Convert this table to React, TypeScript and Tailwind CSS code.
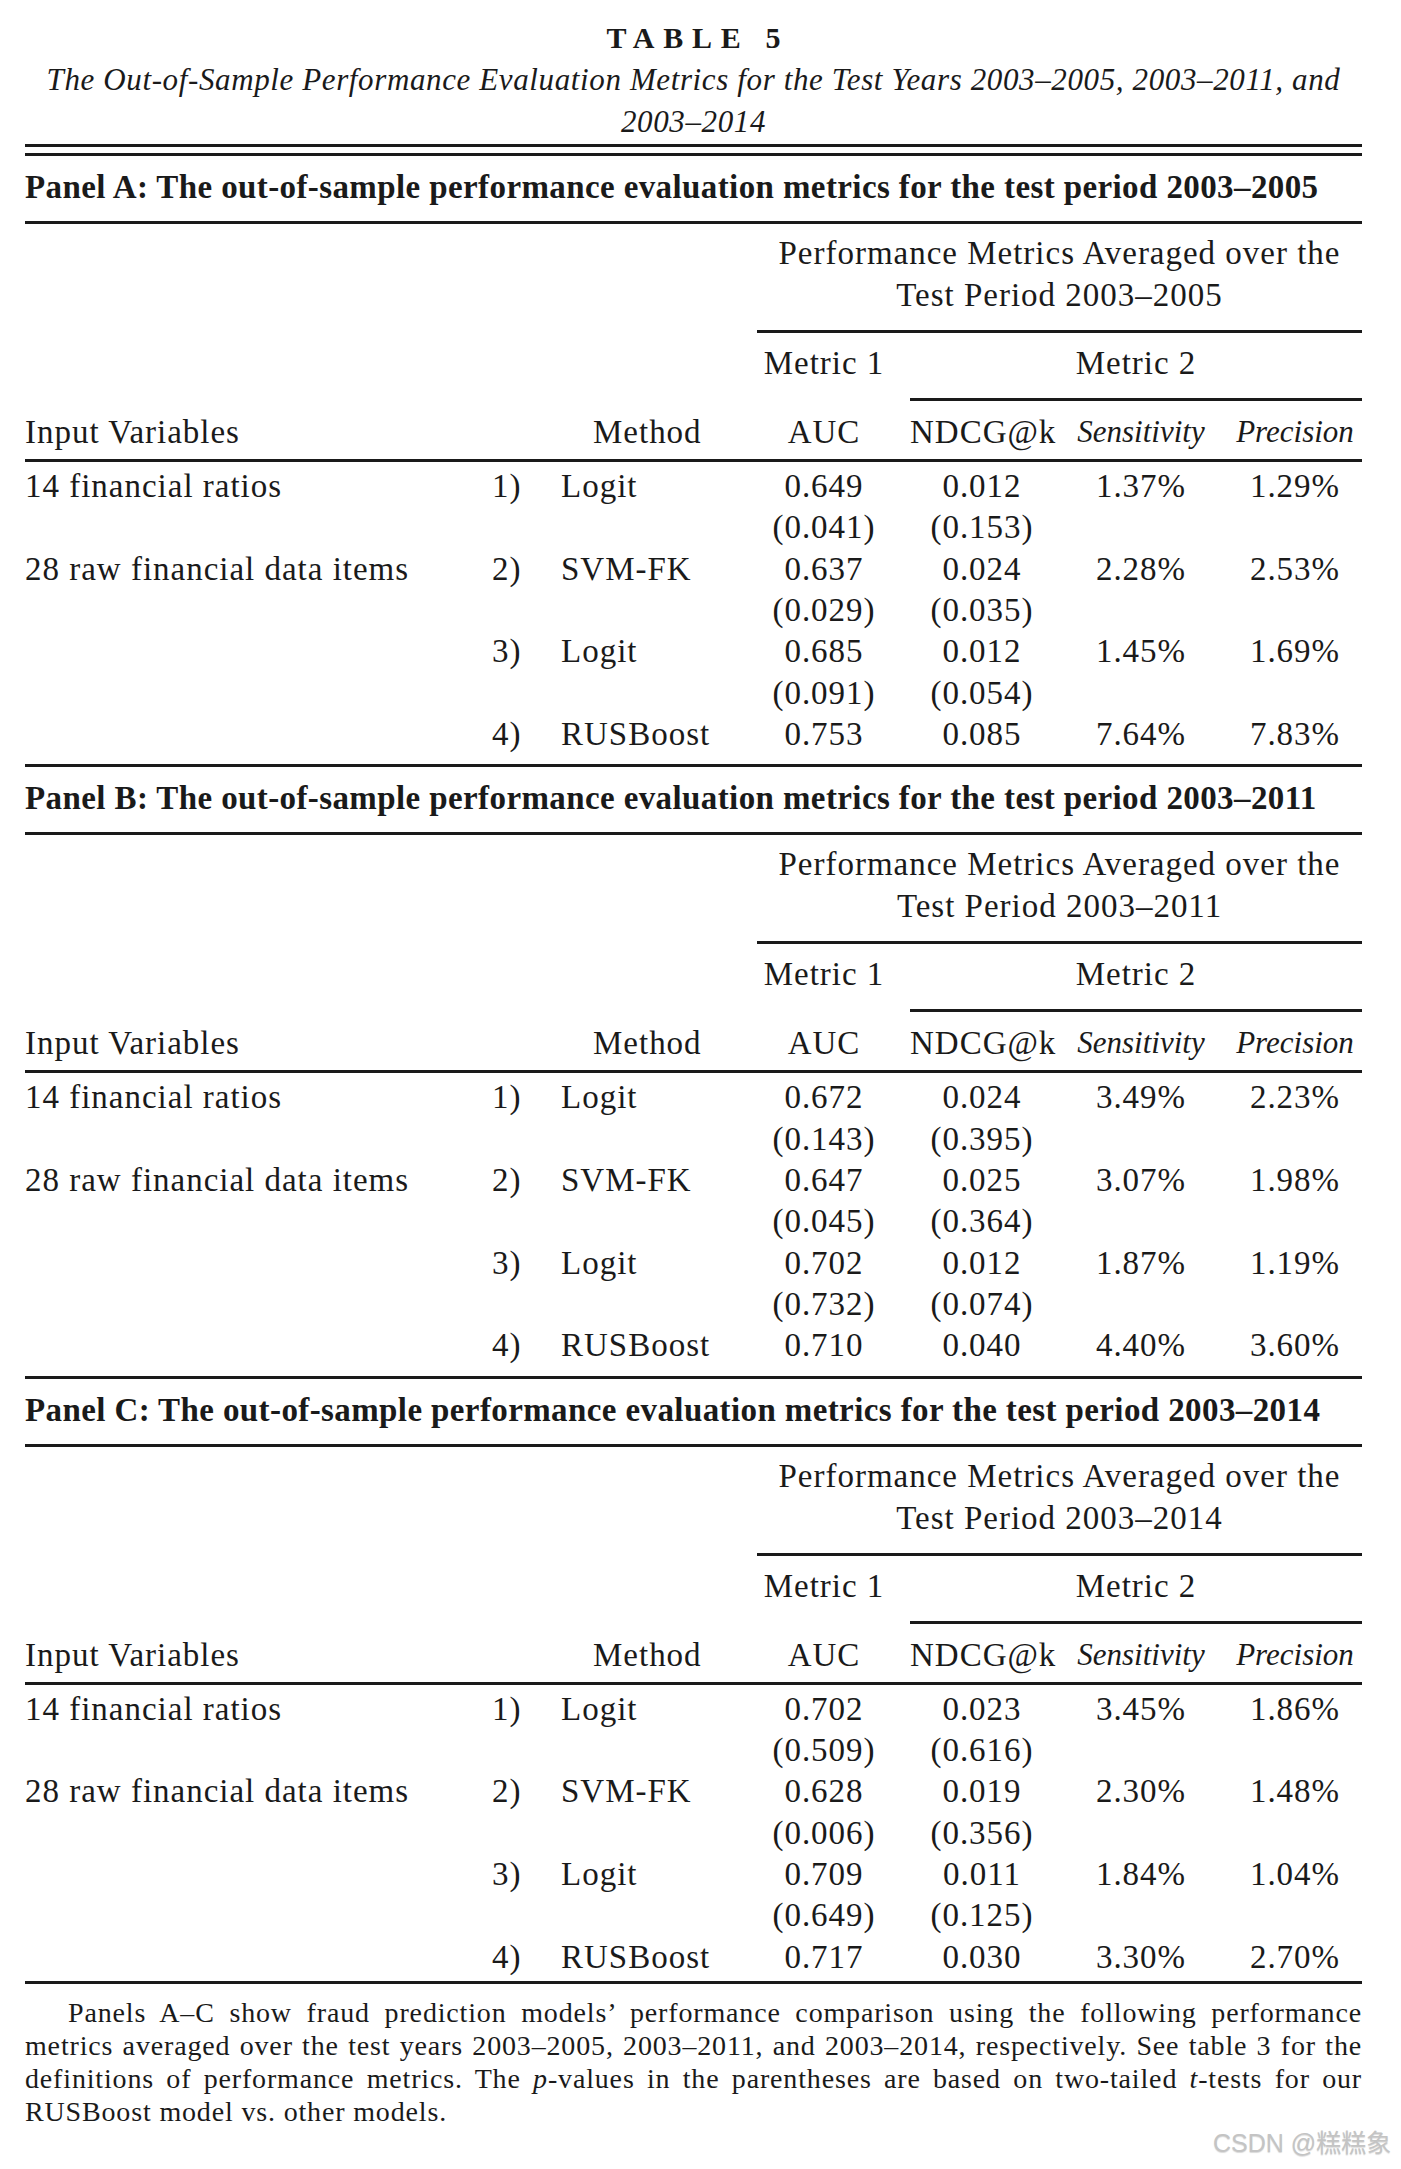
import React from 'react';

type Row = {
  input?: string;
  num?: string;
  method?: string;
  auc: string;
  ndcg: string;
  sens?: string;
  prec?: string;
};

interface Panel {
  label: string;
  period: string;
  rows: Row[];
}

const mk = (vals: string[][]): Row[] => {
  const inputs = ['14 financial ratios', '28 raw financial data items', '', ''];
  const methods = ['Logit', 'SVM-FK', 'Logit', 'RUSBoost'];
  const out: Row[] = [];
  vals.forEach((v, i) => {
    out.push({ input: inputs[i], num: `${i + 1})`, method: methods[i], auc: v[0], ndcg: v[1], sens: v[2], prec: v[3] });
    if (i < 3) out.push({ auc: v[4], ndcg: v[5] });
  });
  return out;
};

const panels: Panel[] = [
  {
    label: 'A',
    period: '2003–2005',
    rows: mk([
      ['0.649', '0.012', '1.37%', '1.29%', '(0.041)', '(0.153)'],
      ['0.637', '0.024', '2.28%', '2.53%', '(0.029)', '(0.035)'],
      ['0.685', '0.012', '1.45%', '1.69%', '(0.091)', '(0.054)'],
      ['0.753', '0.085', '7.64%', '7.83%'],
    ]),
  },
  {
    label: 'B',
    period: '2003–2011',
    rows: mk([
      ['0.672', '0.024', '3.49%', '2.23%', '(0.143)', '(0.395)'],
      ['0.647', '0.025', '3.07%', '1.98%', '(0.045)', '(0.364)'],
      ['0.702', '0.012', '1.87%', '1.19%', '(0.732)', '(0.074)'],
      ['0.710', '0.040', '4.40%', '3.60%'],
    ]),
  },
  {
    label: 'C',
    period: '2003–2014',
    rows: mk([
      ['0.702', '0.023', '3.45%', '1.86%', '(0.509)', '(0.616)'],
      ['0.628', '0.019', '2.30%', '1.48%', '(0.006)', '(0.356)'],
      ['0.709', '0.011', '1.84%', '1.04%', '(0.649)', '(0.125)'],
      ['0.717', '0.030', '3.30%', '2.70%'],
    ]),
  },
];

const Rule = ({ className = '' }: { className?: string }) => <div className={`h-[3px] bg-[#1a1a1a] ${className}`} />;

const PanelBlock = ({ panel, last }: { panel: Panel; last: boolean }) => (
  <div>
    {/* panel title */}
    <div className="pt-[10px] pb-[13px] text-[33px] leading-[42px] font-bold tracking-[0.012em] whitespace-nowrap">
      Panel {panel.label}: The out-of-sample performance evaluation metrics for the test period {panel.period}
    </div>
    <Rule />

    <div className="grid grid-cols-[467px_28px_237px_134px_19px_144px_174px_134px] text-[33px] tracking-[0.03em]">
      {/* spanner heading */}
      <div className="col-start-4 col-span-5 pt-[8px] pb-[14px] text-center leading-[42px]">
        Performance Metrics Averaged over the
        <br />
        Test Period {panel.period}
      </div>
      <Rule className="col-start-4 col-span-5" />

      <div className="col-start-4 pt-[9px] pb-[14px] text-center leading-[42px]">Metric 1</div>
      <div className="col-start-6 col-span-3 pt-[9px] pb-[14px] text-center leading-[42px]">Metric 2</div>
      <Rule className="col-start-6 col-span-3" />

      {/* column heads */}
      <div className="col-start-1 pt-[10px] pb-[6px] leading-[42px]">Input Variables</div>
      <div className="col-span-2 pt-[10px] pb-[6px] pl-[101px] leading-[42px]">Method</div>
      <div className="pt-[10px] pb-[6px] text-center leading-[42px]">AUC</div>
      <div />
      <div className="pt-[10px] pb-[6px] text-center leading-[42px] whitespace-nowrap">NDCG@k</div>
      <div className="pt-[10px] pb-[6px] text-center leading-[42px] italic text-[31px] tracking-normal">Sensitivity</div>
      <div className="pt-[10px] pb-[6px] text-center leading-[42px] italic text-[31px] tracking-normal">Precision</div>
      <Rule className="col-span-8" />

      <div className="col-span-8 h-[4px]" />
      {panel.rows.map((r, i) => (
        <React.Fragment key={i}>
          <div className="h-[41.33px] leading-[41.33px] whitespace-nowrap">{r.input}</div>
          <div className="h-[41.33px] leading-[41.33px]">{r.num}</div>
          <div className="h-[41.33px] leading-[41.33px] pl-[41px]">{r.method}</div>
          <div className="h-[41.33px] leading-[41.33px] text-center">{r.auc}</div>
          <div />
          <div className="h-[41.33px] leading-[41.33px] text-center">{r.ndcg}</div>
          <div className="h-[41.33px] leading-[41.33px] text-center">{r.sens}</div>
          <div className="h-[41.33px] leading-[41.33px] text-center">{r.prec}</div>
        </React.Fragment>
      ))}
      <div className={`col-span-8 ${last ? 'h-[3px]' : 'h-[9px]'}`} />
    </div>
    <Rule />
  </div>
);

export default function App() {
  return (
    <div className="relative w-[1401px] h-[2169px] bg-white text-[#1a1a1a] font-['Liberation_Serif',serif]">
      <div className="ml-[25px] w-[1337px]">
        <div className="pt-[17px] text-center">
          <div className="text-[30px] leading-[42px] font-bold tracking-[0.29em] pl-[0.29em]">TABLE 5</div>
          <div className="text-[31px] leading-[42px] italic tracking-[0.02em]">
            The Out-of-Sample Performance Evaluation Metrics for the Test Years 2003–2005, 2003–2011, and
            <br />
            2003–2014
          </div>
        </div>
        <Rule className="mt-[1px]" />
        <div className="h-[6px]" />
        <Rule />

        {panels.map((p, i) => (
          <PanelBlock key={p.label} panel={p} last={i === panels.length - 1} />
        ))}

        {/* note */}
        <div className="pt-[12px] text-[28px] leading-[33px] tracking-[0.03em]">
          <div className="pl-[43px] [text-align-last:justify] text-justify whitespace-nowrap">
            Panels A–C show fraud prediction models’ performance comparison using the following performance
          </div>
          <div className="[text-align-last:justify] text-justify">
            metrics averaged over the test years 2003–2005, 2003–2011, and 2003–2014, respectively. See table 3 for the
          </div>
          <div className="[text-align-last:justify] text-justify">
            definitions of performance metrics. The <span className="italic">p</span>-values in the parentheses are based on two-tailed <span className="italic">t</span>-tests for our
          </div>
          <div>RUSBoost model vs. other models.</div>
        </div>
      </div>

      <div className="absolute left-[1213px] top-[2128px] text-[25px] leading-[30px] text-[#c4c4c4] font-['Liberation_Sans','Noto_Sans_CJK_SC',sans-serif] [text-shadow:0_1px_1px_rgba(0,0,0,0.15)]">
        CSDN @糕糕象
      </div>
    </div>
  );
}
